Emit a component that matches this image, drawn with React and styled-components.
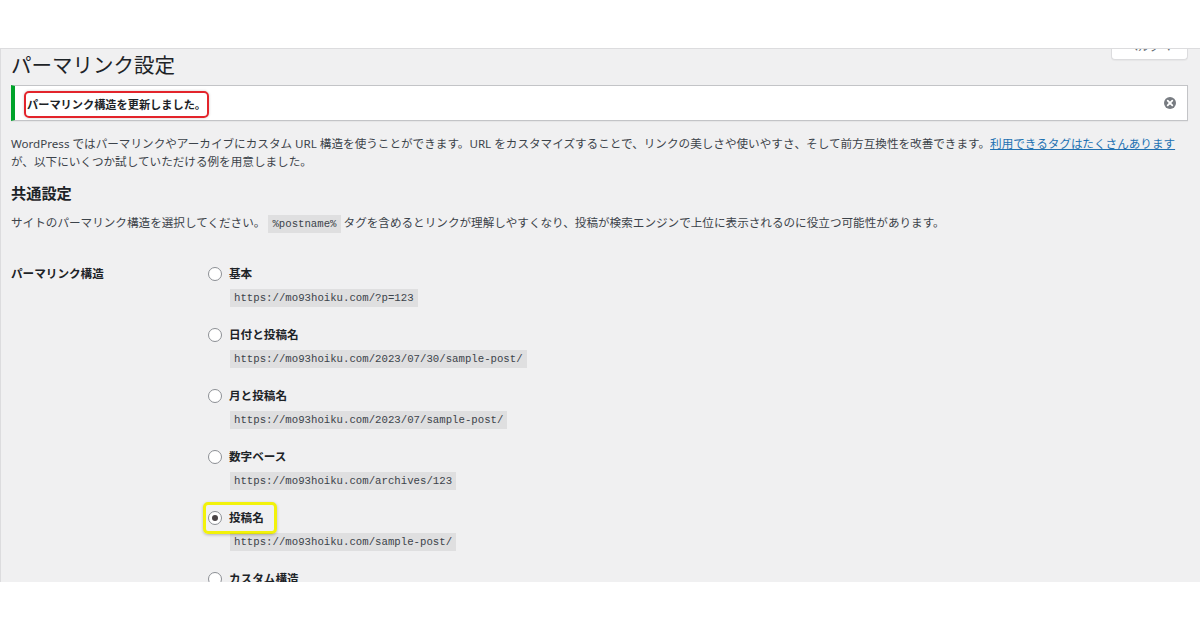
import React from 'react';
import styled, { createGlobalStyle, css } from 'styled-components';

const GlobalStyle = createGlobalStyle`
  html, body {
    margin: 0;
    background: #fff;
  }
  body {
    font-family: "Noto Sans", "Noto Sans CJK JP", sans-serif;
  }
`;

const options = [
    { name: '基本', url: 'https://mo93hoiku.com/?p=123' },
    { name: '日付と投稿名', url: 'https://mo93hoiku.com/2023/07/30/sample-post/' },
    { name: '月と投稿名', url: 'https://mo93hoiku.com/2023/07/sample-post/' },
    { name: '数字ベース', url: 'https://mo93hoiku.com/archives/123' },
    { name: '投稿名', url: 'https://mo93hoiku.com/sample-post/', checked: true },
    { name: 'カスタム構造', url: '' },
];

//×ボタン
const DismissIcon = () => (
    <svg width="12" height="12" viewBox="0 0 12 12">
        <circle cx="6" cy="6" r="6" fill="#787c82" />
        <path d="M3.7 3.7 L8.3 8.3 M8.3 3.7 L3.7 8.3" stroke="#fff" strokeWidth="1.8" strokeLinecap="round" />
    </svg>
);

//パーマリンク設定画面
const App = () => {
    return (
        <>
            <GlobalStyle />
            <Page>
                <Screen>
                    <Header>
                        <Title>パーマリンク設定</Title>
                        <HelpTab>ヘルプ <span>▾</span></HelpTab>
                    </Header>

                    <Notice>
                        <RedMark>パーマリンク構造を更新しました。</RedMark>
                        <Dismiss><DismissIcon /></Dismiss>
                    </Notice>

                    <Intro>
                        WordPress ではパーマリンクやアーカイブにカスタム URL 構造を使うことができます。URL をカスタマイズすることで、リンクの美しさや使いやすさ、そして前方互換性を改善できます。<Link href="#">利用できるタグはたくさんあります</Link>
                        <br />
                        が、以下にいくつか試していただける例を用意しました。
                    </Intro>

                    <SectionTitle>共通設定</SectionTitle>
                    <Text>
                        サイトのパーマリンク構造を選択してください。 <Code>%postname%</Code> タグを含めるとリンクが理解しやすくなり、投稿が検索エンジンで上位に表示されるのに役立つ可能性があります。
                    </Text>

                    <FormTable>
                        <Th>パーマリンク構造</Th>
                        <Options>
                            {options.map((item, index) => (
                                <Option key={index}>
                                    <OptionRow>
                                        {item.checked ? (
                                            <Highlight>
                                                <Radio checked />
                                                <OptionName>{item.name}</OptionName>
                                            </Highlight>
                                        ) : (
                                            <>
                                                <Radio />
                                                <OptionName>{item.name}</OptionName>
                                            </>
                                        )}
                                    </OptionRow>
                                    {item.url ? <UrlCode>{item.url}</UrlCode> : ''}
                                </Option>
                            ))}
                        </Options>
                    </FormTable>
                </Screen>
            </Page>
        </>
    );
};
export default App;


const Page = styled.div`
  padding-top: 48px;
`;

//スクショ部分 - 背景
const Screen = styled.div`
  height: 534px;
  box-sizing: border-box;
  border-top: 1px solid #dcdcde;
  border-left: 1px solid #dcdcde;
  background: #f0f0f1;
  overflow: hidden;
  padding: 0 12px 0 10px;
  font-size: 11.6px;
  line-height: 18px;
  color: #3c434a;
`;

const Header = styled.div`
  display: flex;
  justify-content: space-between;
  align-items: flex-start;
`;

const Title = styled.h1`
  margin: 0;
  padding-top: 3px;
  font-size: 20.5px;
  font-weight: 400;
  line-height: 27px;
  color: #1d2327;
`;

const HelpTab = styled.div`
  margin-top: -12px;
  width: 77px;
  height: 23px;
  box-sizing: border-box;
  padding-bottom: 3px;
  display: flex;
  justify-content: center;
  align-items: center;
  gap: 6px;
  background: #fff;
  border: 1px solid #dcdcde;
  border-top: none;
  border-radius: 0 0 4px 4px;
  box-shadow: 0 1px 1px rgba(0, 0, 0, 0.04);
  font-size: 11px;
  color: #646970;
`;

const Notice = styled.div`
  margin-top: 6px;
  height: 36px;
  box-sizing: border-box;
  display: flex;
  align-items: flex-start;
  justify-content: space-between;
  padding: 5px 11px 0 9px;
  background: #fff;
  border: 1px solid #c3c4c7;
  border-left: 4px solid #00a32a;
  box-shadow: 0 1px 1px rgba(0, 0, 0, 0.04);
`;

//赤枠
const RedMark = styled.span`
  display: inline-block;
  padding: 0 1px 0 1px;
  line-height: 23px;
  border: 2px solid #e3242b;
  border-radius: 5px;
  box-shadow: 0 0 3px rgba(0, 0, 0, 0.2);
  font-size: 11.2px;
  font-weight: 700;
  color: #1d2327;
`;

const Dismiss = styled.span`
  align-self: center;
  display: flex;
  margin-top: -5px;
`;

const Intro = styled.p`
  margin: 14px 0 0;
`;

const Link = styled.a`
  color: #2271b1;
  text-decoration: underline;
`;

const SectionTitle = styled.h2`
  margin: 12px 0 0;
  font-size: 15.2px;
  line-height: 20px;
  font-weight: 700;
  color: #1d2327;
`;

const Text = styled.p`
  margin: 11px 0 0;
`;

const Code = styled.code`
  display: inline-block;
  padding: 0 4px;
  background: rgba(0, 0, 0, 0.07);
  font-family: "Liberation Mono", monospace;
  font-size: 10.7px;
  line-height: 18px;
  color: #3c434a;
`;

const FormTable = styled.div`
  display: grid;
  grid-template-columns: 197px 1fr;
  margin-top: 32px;
`;

const Th = styled.div`
  font-weight: 700;
  color: #1d2327;
`;

const Options = styled.div`
  display: flex;
  flex-direction: column;
`;

const Option = styled.div`
  display: flex;
  flex-direction: column;
  align-items: flex-start;
  gap: 6px;
  & + & {
    margin-top: 19px;
  }
`;

const OptionRow = styled.div`
  display: flex;
  align-items: center;
  gap: 7px;
  height: 18px;
`;

//黄色枠
const Highlight = styled.span`
  display: flex;
  align-items: center;
  gap: 7px;
  padding: 4px 10px 4px 2px;
  margin: -7px -13px -7px -5px;
  border: 3px solid #f2f20a;
  border-radius: 5px;
  box-shadow: 0 1px 3px rgba(0, 0, 0, 0.25);
`;

const Radio = styled.span`
  position: relative;
  width: 14px;
  height: 14px;
  box-sizing: border-box;
  flex-shrink: 0;
  border: 1px solid #8c8f94;
  border-radius: 50%;
  background: #fff;
  ${props => props.checked && css`
    &::before {
      content: '';
      position: absolute;
      inset: 3px;
      border-radius: 50%;
      background: #4a4446;
    }
  `}
`;

const OptionName = styled.span`
  font-weight: 700;
  color: #1d2327;
`;

const UrlCode = styled(Code)`
  margin-left: 22px;
`;
